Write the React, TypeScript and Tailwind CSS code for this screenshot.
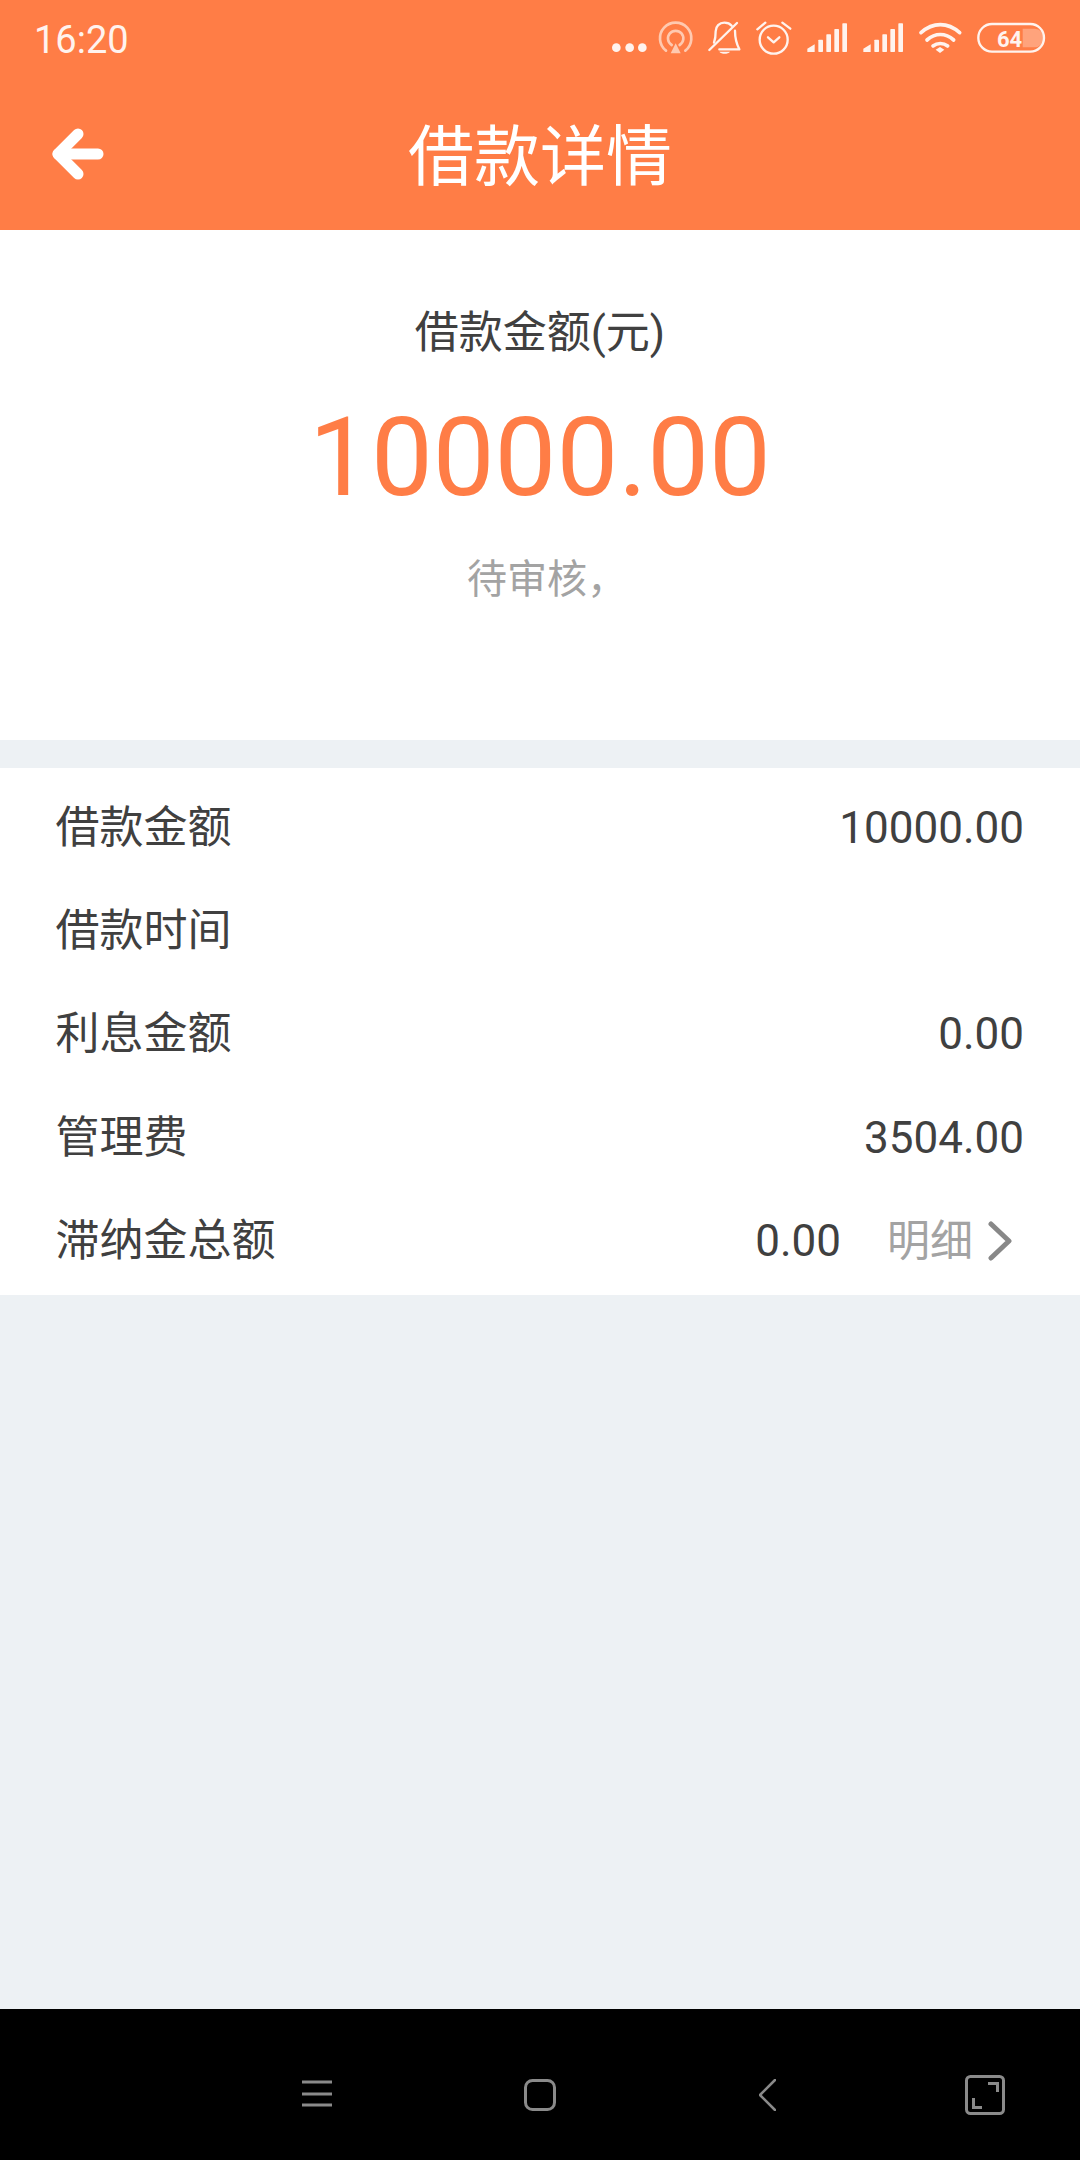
import React from "react";

const font = { sans: "font-['Roboto','Noto_Sans_CJK_SC',sans-serif]" };

function StatusIcons() {
  // viewBox is 3x the screen size, traced from the status bar
  return (
    <svg width="437" height="37" viewBox="60 60 1311 111" fill="none">
      <g fill="#fff3ee">
        <circle cx="79" cy="143" r="13" />
        <circle cx="119" cy="143" r="13" />
        <circle cx="157" cy="143" r="13" />
      </g>
      {/* hotspot */}
      <g stroke="#ffc9b0" strokeWidth="8" strokeLinecap="round">
        <path d="M228 152a47 47 0 1 1 58 0" />
        <path d="M245 135a23 23 0 1 1 24 0" />
      </g>
      <path d="M257 130l15 30h-30z" fill="#ffc9b0" />
      {/* muted bell */}
      <g stroke="#fff3ee" strokeWidth="7" strokeLinecap="round" strokeLinejoin="round">
        <path d="M372 128c3-8 5-16 5-34 0-15 11-26 26-26 10 0 17 3 22 9" />
        <path d="M435 92c0 22 4 38 13 56h-60" />
        <path d="M358 150l83-81" />
      </g>
      <path d="M388 155h32c-6 8-26 8-32 0z" fill="#fff3ee" />
      {/* alarm */}
      <g stroke="#fff3ee" strokeWidth="7" strokeLinecap="round" strokeLinejoin="round">
        <circle cx="551" cy="119" r="42" />
        <path d="M502 88l24-20" />
        <path d="M601 86l-24-18" />
        <path d="M534 112l17 15 17-15" />
      </g>
      {/* signal x2 */}
      <g fill="#fff3ee">
        <path d="M652 156v-10l22-13v23z" />
        <rect x="685" y="119" width="14" height="37" rx="2" />
        <rect x="709" y="103" width="14" height="53" rx="2" />
        <rect x="733" y="87" width="14" height="69" rx="2" />
        <rect x="757" y="70" width="14" height="86" rx="2" />
        <path d="M820 156v-10l22-13v23z" />
        <rect x="853" y="119" width="14" height="37" rx="2" />
        <rect x="877" y="103" width="14" height="53" rx="2" />
        <rect x="901" y="87" width="14" height="69" rx="2" />
        <rect x="925" y="70" width="14" height="86" rx="2" />
      </g>
      {/* wifi */}
      <g stroke="#fff3ee" strokeWidth="11" strokeLinecap="round">
        <path d="M993 98c36-32 80-32 116 0" />
        <path d="M1011 120c25-22 55-22 80 0" />
        <path d="M1029 138c13-10 31-10 44 0" />
      </g>
      <path d="M1037 149l13-8 13 8-13 10z" fill="#fff3ee" />
      {/* battery */}
      <path d="M1298 86h36a28 28 0 0 1 0 56h-36z" fill="#ffa37c" />
      <rect x="1165" y="72" width="197" height="83" rx="41" stroke="#fff3ee" strokeWidth="7" />
      <text x="1221" y="141" fill="#fff3ee" fontSize="66" fontWeight="700" fontFamily="Roboto, sans-serif">64</text>
    </svg>
  );
}

function BackArrow() {
  return (
    <svg width="52" height="52" viewBox="0 0 52 52" fill="none" stroke="#fff" strokeWidth="11" strokeLinecap="round" strokeLinejoin="round">
      <path d="M6 26h40" />
      <path d="M26 6L6 26l20 20" />
    </svg>
  );
}

function Row({ label, value, detail }: { label: string; value?: string; detail?: boolean }) {
  return (
    <div className="flex h-[103.4px] items-center justify-between pl-[55.5px] pr-[56px]">
      <span>{label}</span>
      {detail ? (
        <div className="flex items-center">
          <span>{value}</span>
          <span className="ml-[46px] text-[43px] text-[#a3a3a3]">明细</span>
          <svg className="ml-[14px] mr-[11px]" width="26" height="40" viewBox="0 0 26 40" fill="none" stroke="#888888" strokeWidth="5" strokeLinecap="round" strokeLinejoin="round">
            <path d="M4 3l18 17L4 37" />
          </svg>
        </div>
      ) : (
        <span>{value}</span>
      )}
    </div>
  );
}

export default function App() {
  return (
    <div className={`flex h-[2160px] w-[1080px] flex-col bg-[#edf1f4] ${font.sans}`}>
      <header className="h-[230px] shrink-0 bg-[#ff7d46] text-white">
        <div className="flex h-[80px] items-start justify-between pl-[34px] pr-[33px] pt-[20px]">
          <span className="text-[38px] leading-[40px] text-[#fff3ee]">16:20</span>
          <StatusIcons />
        </div>
        <div className="grid h-[150px] grid-cols-[1fr_auto_1fr] items-start">
          <div className="pl-[52px] pt-[48px]">
            <BackArrow />
          </div>
          <h1 className="pt-[30px] text-[66px] font-normal leading-[96px]">借款详情</h1>
          <div />
        </div>
      </header>

      <section className="flex h-[510px] shrink-0 flex-col items-center bg-white pt-[73px] text-[#404040]">
        <p className="text-[44px] leading-[60px]">借款金额(元)</p>
        <p className="mt-[30px] text-[110px] leading-[130px] text-[#ff7d46]">10000.00</p>
        <p className="ml-[14px] mt-[29px] text-[40px] leading-[56px] text-[#a3a3a3]">待审核，</p>
      </section>

      <section className="mt-[28px] h-[527px] shrink-0 bg-white pt-[8px] text-[44px] leading-[60px] text-[#404040]">
        <Row label="借款金额" value="10000.00" />
        <Row label="借款时间" />
        <Row label="利息金额" value="0.00" />
        <Row label="管理费" value="3504.00" />
        <Row label="滞纳金总额" value="0.00" detail />
      </section>

      <div className="flex-1" />

      <nav className="flex h-[151px] shrink-0 items-start bg-black pl-[302px] pt-[66px]">
        <svg className="mt-[5px]" width="30" height="27" viewBox="0 0 30 27" stroke="#8a8a8a" strokeWidth="3" fill="none">
          <path d="M0 2h30M0 14h30M0 25h30" />
        </svg>
        <svg className="ml-[192px] mt-[4px]" width="32" height="32" viewBox="0 0 32 32" fill="none" stroke="#8a8a8a" strokeWidth="3">
          <rect x="1.500" y="1.500" width="29" height="29" rx="7" />
        </svg>
        <svg className="ml-[203px] mt-[4px]" width="17" height="32" viewBox="0 0 17 32" fill="none" stroke="#8a8a8a" strokeWidth="2.500" strokeLinecap="round" strokeLinejoin="round">
          <path d="M16 1L1 16l15 15" />
        </svg>
        <svg className="ml-[189px]" width="40" height="40" viewBox="0 0 40 40" fill="none" stroke="#8a8a8a" strokeWidth="3">
          <rect x="1.500" y="1.500" width="37" height="37" rx="4" />
          <path d="M23 8.500h9.500V17M8.500 23v9.500H17" />
        </svg>
      </nav>
    </div>
  );
}
